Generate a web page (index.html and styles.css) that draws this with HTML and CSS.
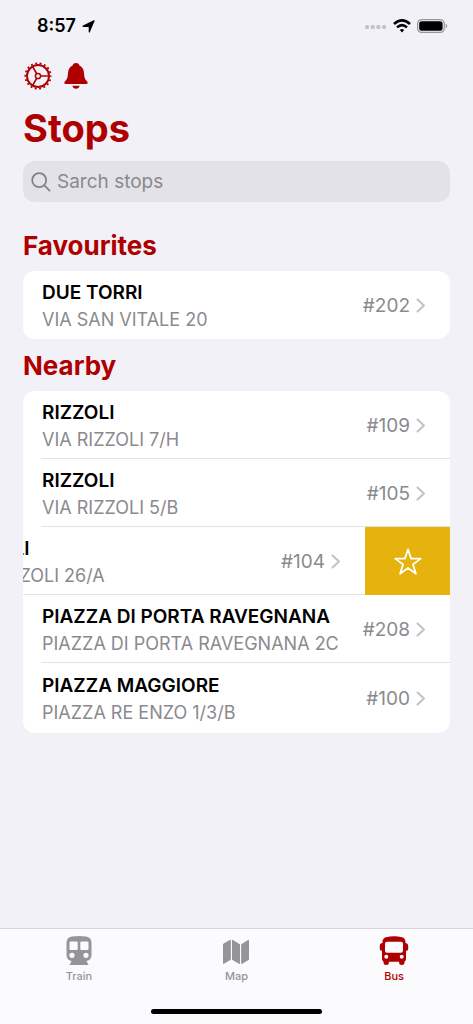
FILE: index.html
```html
<!DOCTYPE html>
<html lang="en">
<head>
<meta charset="utf-8">
<meta name="viewport" content="width=device-width, initial-scale=1">
<title>Stops</title>
<link rel="stylesheet" href="styles.css">
</head>
<body class="app">
<header class="status">
  <div class="status-side">
    <span class="clock">8:57</span>
    <svg class="location" width="13" height="13" viewBox="0 0 13 13" aria-hidden="true"><path d="M12.700.8 7.900 12.100q-.7 1.100-1.200-.1V6.900H1.200q-1.500-.4-.2-1.300L11.700.2q1.300-.3 1 .6z"/></svg>
  </div>
  <div class="status-side">
    <svg width="22" height="5" viewBox="0 0 22 5" fill="#c2c1c6" aria-hidden="true"><rect x="0" y="1" width="4" height="4" rx="1.500"/><rect x="5.700" y="1" width="4" height="4" rx="1.500"/><rect x="11.400" y="1" width="4" height="4" rx="1.500"/><rect x="17.100" y="1" width="4" height="4" rx="1.500"/></svg>
    <svg class="wifi" width="18" height="14" viewBox="0 0 18 14" fill="none" stroke="#000" stroke-width="2.600" aria-hidden="true"><path d="M1 4.900Q9-2.100 17 4.900"/><path d="M4 8.400q5-4.500 10 0"/><path d="M6.800 11 9 13.400l2.200-2.400Q9 9.200 6.800 11z" fill="#000" stroke="none"/></svg>
    <svg width="31" height="14" viewBox="0 0 31 14" aria-hidden="true"><rect x=".6" y=".6" width="26.600" height="12.800" rx="4" fill="none" stroke="#98979b" stroke-width="1.200"/><rect x="2.200" y="2.200" width="23.400" height="9.600" rx="2.400"/><path d="M28.600 4.600q1.600.6 1.600 2.400t-1.600 2.400z" fill="#98979b"/></svg>
  </div>
</header>

<main class="content">
  <div class="tools">
    <button class="tool" type="button" aria-label="Settings">
      <svg width="28" height="28" viewBox="0 0 28 28" fill="none" stroke="currentColor" aria-hidden="true">
        <circle cx="14" cy="14" r="11" stroke-width="1.900"/>
        <circle cx="14" cy="14" r="12.700" stroke-width="1.800" stroke-dasharray="1.900 2.533" stroke-dashoffset="0.950"/>
        <circle cx="14" cy="14" r="2.600" stroke-width="1.500"/>
        <path d="M16.700 14h8.300M12.700 11.700 8.500 4.400M12.700 16.300l-4.200 7.300" stroke-width="1.700"/>
      </svg>
    </button>
    <button class="tool" type="button" aria-label="Notifications">
      <svg width="24" height="26" viewBox="0 0 24 26" fill="currentColor" aria-hidden="true"><path d="M12 0c2 0 3.100 1.100 3.400 2.400 3 1.400 4.400 4 4.600 7.600.2 4 .7 6 2.400 7.700.8.8 1.300 1.300 1.300 2.100 0 .7-.5 1.200-1.400 1.200H1.700C.8 21 .3 20.500.3 19.800c0-.8.5-1.300 1.300-2.100C3.300 16 3.800 14 4 10c.2-3.600 1.600-6.200 4.600-7.600C8.900 1.100 10 0 12 0zM8.400 22.700h7.200c-.3 1.800-1.700 3-3.600 3s-3.300-1.200-3.600-3z"/></svg>
    </button>
  </div>
  <h1 class="title">Stops</h1>
  <label class="search">
    <svg width="20" height="20" viewBox="0 0 20 20" fill="none" stroke="currentColor" stroke-width="1.800" stroke-linecap="round" aria-hidden="true"><circle cx="8.200" cy="8.200" r="7"/><path d="m13.300 13.300 5.300 5.300"/></svg>
    <input class="search-input" type="search" placeholder="Sarch stops" aria-label="Search stops">
  </label>

  <section>
    <h2 class="heading">Favourites</h2>
    <ul class="card">
      <li class="row"><a class="stop" href="#202"><span class="label"><strong class="name">DUE TORRI</strong><span class="address">VIA SAN VITALE 20</span></span><span class="code">#202</span><svg class="chevron" width="10" height="15" viewBox="0 0 10 15"><path d="m1.500 1.500 6.500 6-6.500 6"/></svg></a></li>
    </ul>
  </section>

  <section>
    <h2 class="heading">Nearby</h2>
    <ul class="card">
      <li class="row"><a class="stop" href="#109"><span class="label"><strong class="name">RIZZOLI</strong><span class="address">VIA RIZZOLI 7/H</span></span><span class="code">#109</span><svg class="chevron" width="10" height="15" viewBox="0 0 10 15"><path d="m1.500 1.500 6.500 6-6.500 6"/></svg></a></li>
      <li class="row"><a class="stop" href="#105"><span class="label"><strong class="name">RIZZOLI</strong><span class="address">VIA RIZZOLI 5/B</span></span><span class="code">#105</span><svg class="chevron" width="10" height="15" viewBox="0 0 10 15"><path d="m1.500 1.500 6.500 6-6.500 6"/></svg></a></li>
      <li class="row"><a class="stop" href="#104"><span class="label"><strong class="name">RIZZOLI</strong><span class="address">VIA RIZZOLI 26/A</span></span><span class="code">#104</span><svg class="chevron" width="10" height="15" viewBox="0 0 10 15"><path d="m1.500 1.500 6.500 6-6.500 6"/></svg></a>
        <button class="favourite" type="button" aria-label="Add to favourites"><svg width="28" height="27" viewBox="0 0 28 27" fill="none" stroke="#fff" stroke-width="1.800" stroke-linejoin="round" aria-hidden="true"><path d="m14 1.400 3.100 9.100 9.700.1-7.800 5.800 2.900 9.300-7.900-5.600-7.900 5.600L9 16.400l-7.800-5.800 9.700-.1z"/></svg></button></li>
      <li class="row"><a class="stop" href="#208"><span class="label"><strong class="name">PIAZZA DI PORTA RAVEGNANA</strong><span class="address">PIAZZA DI PORTA RAVEGNANA 2C</span></span><span class="code">#208</span><svg class="chevron" width="10" height="15" viewBox="0 0 10 15"><path d="m1.500 1.500 6.500 6-6.500 6"/></svg></a></li>
      <li class="row"><a class="stop" href="#100"><span class="label"><strong class="name">PIAZZA MAGGIORE</strong><span class="address">PIAZZA RE ENZO 1/3/B</span></span><span class="code">#100</span><svg class="chevron" width="10" height="15" viewBox="0 0 10 15"><path d="m1.500 1.500 6.500 6-6.500 6"/></svg></a></li>
    </ul>
  </section>
</main>

<footer class="dock">
  <nav class="tabs">
    <a class="tab" href="#train">
      <svg width="30" height="30" viewBox="0 0 30 30" fill="currentColor" aria-hidden="true"><path fill-rule="evenodd" d="M8 .5Q15-.5 22 .5q5.500.8 5.500 6.500v12q0 5-5 6l2 4H5.500l2-4q-5-1-5-6V7Q2.500 1.300 8 .5zM6.500 5.500q-1 0-1 1V13q0 1 1 1h6.200q1 0 1-1V6.500q0-1-1-1zM17.300 5.500q-1 0-1 1V13q0 1 1 1h6.200q1 0 1-1V6.500q0-1-1-1zM8 16.700a2.600 2.600 0 1 0 0 5.200 2.600 2.600 0 0 0 0-5.200zM22 16.700a2.600 2.600 0 1 0 0 5.200 2.600 2.600 0 0 0 0-5.200z"/></svg>
      <span>Train</span>
    </a>
    <a class="tab" href="#map">
      <svg width="30" height="30" viewBox="0 0 30 30" fill="currentColor" stroke="currentColor" stroke-linejoin="round" aria-hidden="true"><path d="M2.500 8 9.300 4.200v19.300L2.500 27.500zM11.500 4.200l7 4.300v19l-7-4zM20.700 8.500l6.800-4.300v19.300l-6.800 4z"/></svg>
      <span>Map</span>
    </a>
    <a class="tab tab-active" href="#bus" aria-current="page">
      <svg width="30" height="30" viewBox="0 0 30 30" fill="currentColor" aria-hidden="true"><path fill-rule="evenodd" d="M7 1.200Q15-.8 23 1.200q3.200.8 3.500 4.300V7q2.700.2 2.700 2.500v3.500q0 1.700-1.700 1.700h-.5V23q0 1.800-1.500 2.400V27q0 2-2.700 2t-2.700-2v-1.200H9.900V27q0 2-2.700 2t-2.700-2v-1.600Q3 24.800 3 23v-8.300h-.5Q.8 14.700.8 13V9.500Q.8 7.200 3.500 7V5.500Q3.800 2 7 1.200zM8 5.700q-2 0-2 2v7q0 2 2 2h14q2 0 2-2v-7q0-2-2-2zM7.300 18.700a2 2 0 1 0 0 4 2 2 0 0 0 0-4zM22.700 18.700a2 2 0 1 0 0 4 2 2 0 0 0 0-4z"/></svg>
      <span>Bus</span>
    </a>
  </nav>
  <div class="home-indicator"></div>
</footer>
</body>
</html>
```
FILE: styles.css
```css
* { box-sizing: border-box; }

.app {
  margin: 0;
  min-height: 100vh;
  display: flex;
  flex-direction: column;
  background: #f2f1f7;
  color: #000;
  font-family: Inter, "Liberation Sans", sans-serif;
}

a { color: inherit; text-decoration: none; }

button {
  padding: 0;
  border: 0;
  background: none;
  color: inherit;
  cursor: pointer;
}

svg { display: block; flex: none; }

.status {
  display: flex;
  justify-content: space-between;
  padding: 14px 25px 0 37px;
}

.status-side {
  display: flex;
  align-items: center;
  gap: 6px;
  height: 24px;
}

.clock { font-size: 18px; font-weight: 600; line-height: 24px; }

.content {
  flex: 1;
  padding: 24px 23px;
}

.tools {
  display: flex;
  align-items: center;
  gap: 12px;
  padding-left: 1px;
  color: #ae0000;
}

.title {
  margin: 15px 0 10px;
  color: #ae0000;
  font-size: 38px;
  font-weight: 700;
  line-height: 46px;
}

.search {
  display: flex;
  align-items: center;
  gap: 6px;
  height: 41px;
  margin-bottom: 26px;
  padding: 0 8px;
  border-radius: 12px;
  background: #e3e2e8;
  color: #838288;
}

.search-input {
  flex: 1;
  min-width: 0;
  padding: 0;
  border: 0;
  outline: 0;
  background: none;
  color: #000;
  font: inherit;
  font-size: 19px;
}

.search-input::placeholder { color: #8a898e; opacity: 1; }

.heading {
  margin: 0;
  padding: 2px 0 9px;
  color: #ae0000;
  font-size: 26px;
  font-weight: 700;
  line-height: 32px;
}

.card {
  margin: 0 0 9px;
  padding: 0;
  overflow: hidden;
  border-radius: 12px;
  background: #fff;
  list-style: none;
}

.row {
  display: flex;
  justify-content: flex-end;
  overflow: hidden;
}

.stop {
  flex: 0 0 calc(100% - 18px);
  display: flex;
  align-items: center;
  gap: 6px;
  padding: 6px 24px 6px 1px;
}

.row:not(:last-child) .stop { box-shadow: inset 0 -1px #e3e3e5; }

.row:last-child:not(:first-child) .stop { padding: 7px 24px 7px 1px; }

.label {
  flex: 1;
  display: flex;
  flex-direction: column;
  padding-top: 2px;
  white-space: nowrap;
}

.name { font-size: 19px; font-weight: 600; line-height: 27px; }

.address { color: #8a8a8e; font-size: 18px; line-height: 27px; }

.code { color: #8a8a8e; font-size: 19px; }

.chevron {
  fill: none;
  stroke: #c2c2c5;
  stroke-width: 2px;
  stroke-linecap: round;
  stroke-linejoin: round;
}

.favourite {
  flex: 0 0 85px;
  display: grid;
  place-items: center;
  background: #e5b20e;
}

.dock {
  padding-bottom: 10px;
  border-top: 1px solid #d6d5dc;
  background: #fbfbfd;
}

.tabs { display: grid; grid-template-columns: repeat(3, 1fr); }

.tab {
  display: flex;
  flex-direction: column;
  align-items: center;
  gap: 3px;
  padding: 7px 0 26px;
  color: #959498;
  font-size: 11px;
  font-weight: 500;
  line-height: 14px;
}

.tab-active { color: #ae0000; }

.home-indicator {
  width: 36%;
  height: 5px;
  margin: 0 auto;
  border-radius: 3px;
  background: #000;
}
```
